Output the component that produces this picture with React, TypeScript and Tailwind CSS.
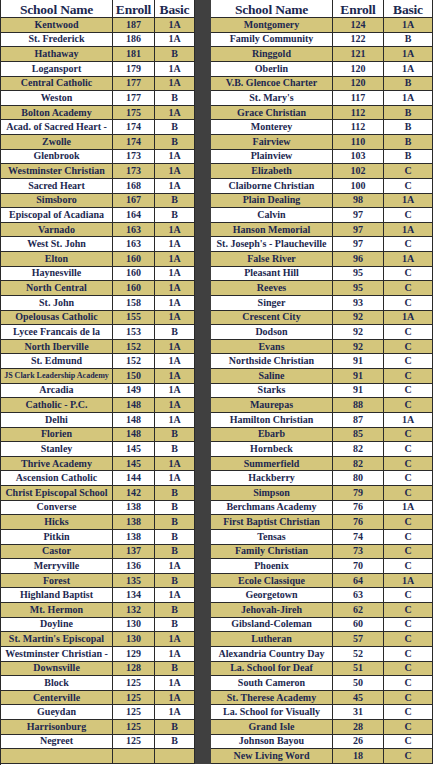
import React from "react";

type Row = [string, string, string];

const left: Row[] = [
  ["Kentwood", "187", "1A"],
  ["St. Frederick", "186", "1A"],
  ["Hathaway", "181", "B"],
  ["Logansport", "179", "1A"],
  ["Central Catholic", "177", "1A"],
  ["Weston", "177", "B"],
  ["Bolton Academy", "175", "1A"],
  ["Acad. of Sacred Heart -", "174", "B"],
  ["Zwolle", "174", "B"],
  ["Glenbrook", "173", "1A"],
  ["Westminster Christian", "173", "1A"],
  ["Sacred Heart", "168", "1A"],
  ["Simsboro", "167", "B"],
  ["Episcopal of Acadiana", "164", "B"],
  ["Varnado", "163", "1A"],
  ["West St. John", "163", "1A"],
  ["Elton", "160", "1A"],
  ["Haynesville", "160", "1A"],
  ["North Central", "160", "1A"],
  ["St. John", "158", "1A"],
  ["Opelousas Catholic", "155", "1A"],
  ["Lycee Francais de la", "153", "B"],
  ["North Iberville", "152", "1A"],
  ["St. Edmund", "152", "1A"],
  ["JS Clark Leadership Academy", "150", "1A"],
  ["Arcadia", "149", "1A"],
  ["Catholic - P.C.", "148", "1A"],
  ["Delhi", "148", "1A"],
  ["Florien", "148", "B"],
  ["Stanley", "145", "B"],
  ["Thrive Academy", "145", "1A"],
  ["Ascension Catholic", "144", "1A"],
  ["Christ Episcopal School", "142", "B"],
  ["Converse", "138", "B"],
  ["Hicks", "138", "B"],
  ["Pitkin", "138", "B"],
  ["Castor", "137", "B"],
  ["Merryville", "136", "1A"],
  ["Forest", "135", "B"],
  ["Highland Baptist", "134", "1A"],
  ["Mt. Hermon", "132", "B"],
  ["Doyline", "130", "B"],
  ["St. Martin's Episcopal", "130", "1A"],
  ["Westminster Christian -", "129", "1A"],
  ["Downsville", "128", "B"],
  ["Block", "125", "1A"],
  ["Centerville", "125", "1A"],
  ["Gueydan", "125", "1A"],
  ["Harrisonburg", "125", "B"],
  ["Negreet", "125", "B"],
  ["", "", ""],
];

const right: Row[] = [
  ["Montgomery", "124", "1A"],
  ["Family Community", "122", "B"],
  ["Ringgold", "121", "1A"],
  ["Oberlin", "120", "1A"],
  ["V.B. Glencoe Charter", "120", "B"],
  ["St. Mary's", "117", "1A"],
  ["Grace Christian", "112", "B"],
  ["Monterey", "112", "B"],
  ["Fairview", "110", "B"],
  ["Plainview", "103", "B"],
  ["Elizabeth", "102", "C"],
  ["Claiborne Christian", "100", "C"],
  ["Plain Dealing", "98", "1A"],
  ["Calvin", "97", "C"],
  ["Hanson Memorial", "97", "1A"],
  ["St. Joseph's - Plaucheville", "97", "C"],
  ["False River", "96", "1A"],
  ["Pleasant Hill", "95", "C"],
  ["Reeves", "95", "C"],
  ["Singer", "93", "C"],
  ["Crescent City", "92", "1A"],
  ["Dodson", "92", "C"],
  ["Evans", "92", "C"],
  ["Northside Christian", "91", "C"],
  ["Saline", "91", "C"],
  ["Starks", "91", "C"],
  ["Maurepas", "88", "C"],
  ["Hamilton Christian", "87", "1A"],
  ["Ebarb", "85", "C"],
  ["Hornbeck", "82", "C"],
  ["Summerfield", "82", "C"],
  ["Hackberry", "80", "C"],
  ["Simpson", "79", "C"],
  ["Berchmans Academy", "76", "1A"],
  ["First Baptist Christian", "76", "C"],
  ["Tensas", "74", "C"],
  ["Family Christian", "73", "C"],
  ["Phoenix", "70", "C"],
  ["Ecole Classique", "64", "1A"],
  ["Georgetown", "63", "C"],
  ["Jehovah-Jireh", "62", "C"],
  ["Gibsland-Coleman", "60", "C"],
  ["Lutheran", "57", "C"],
  ["Alexandria Country Day", "52", "C"],
  ["La. School for Deaf", "51", "C"],
  ["South Cameron", "50", "C"],
  ["St. Therese Academy", "45", "C"],
  ["La. School for Visually", "31", "C"],
  ["Grand Isle", "28", "C"],
  ["Johnson Bayou", "26", "C"],
  ["New Living Word", "18", "C"],
];

const cell =
  "flex items-center justify-center border-r border-b border-[#2a2a2a] whitespace-nowrap overflow-hidden leading-none";

function Table({ rows, cols, wide }: { rows: Row[]; cols: string; wide: boolean }) {
  return (
    <div
      className={`grid ${cols} grid-rows-[18px_repeat(51,14.63px)] ${
        wide ? "" : "border-l border-[#2a2a2a]"
      }`}
    >
      {["School Name", "Enroll", "Basic"].map((h) => (
        <div
          key={h}
          className={`${cell} bg-white text-[13.5px] font-bold tracking-[-0.2px] pt-[2px]`}
        >
          {h}
        </div>
      ))}
      {rows.map((r, i) => {
        const bg = i % 2 === 0 ? "bg-[#d4c67c]" : "bg-white";
        return (
          <React.Fragment key={i}>
            <div
              className={`${cell} ${bg} font-bold ${
                r[0].startsWith("JS Clark") ? "text-[8px]" : "text-[10px]"
              }`}
            >
              {r[0]}
            </div>
            <div className={`${cell} ${bg} font-bold text-[10px]`}>{r[1]}</div>
            <div className={`${cell} ${bg} font-bold text-[10px]`}>{r[2]}</div>
          </React.Fragment>
        );
      })}
    </div>
  );
}

export default function App() {
  return (
    <div className="flex w-[436px] h-[765px] bg-white text-[#1c2850] font-[Liberation_Serif,Tinos,DejaVu_Serif,serif]">
      <Table rows={left} cols="grid-cols-[112px_42px_40px]" wide={false} />
      <div className="w-[16px] h-[764px] bg-[#404040]" />
      <Table rows={right} cols="grid-cols-[122px_51px_49px]" wide={true} />
    </div>
  );
}
